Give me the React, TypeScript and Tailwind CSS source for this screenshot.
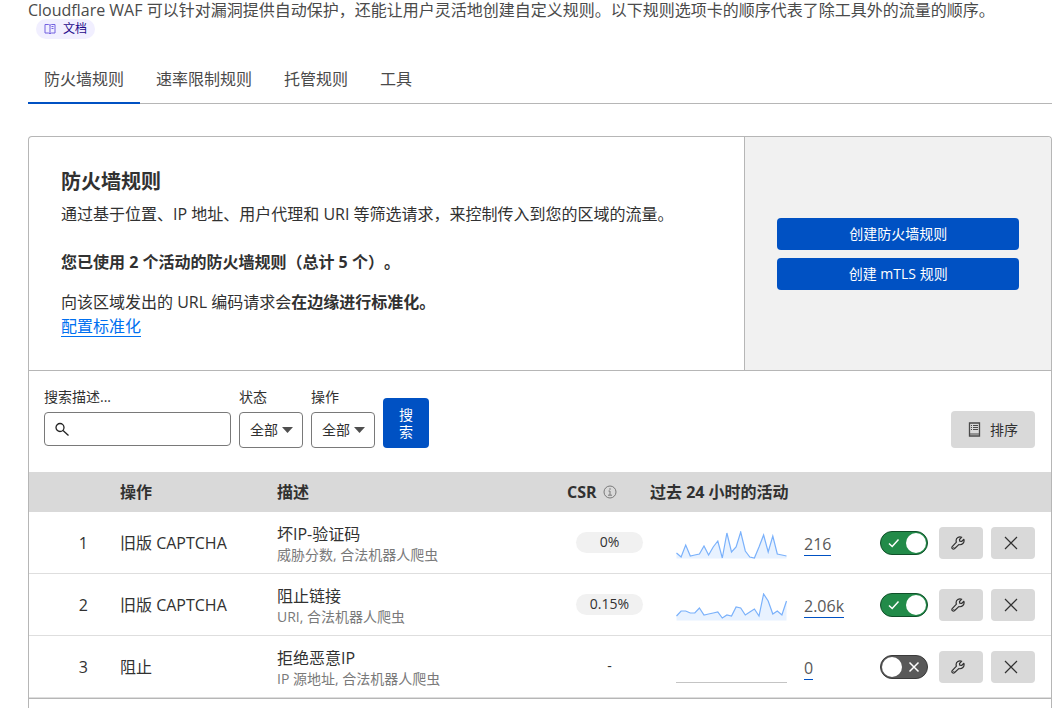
import { useState } from 'react'

type Rule = {
  id: number
  action: string
  description: string
  fields: string
  csr: string
  total: string
  activity: number[]
  enabled: boolean
}

const initialRules: Rule[] = [
  {
    id: 1,
    action: '旧版 CAPTCHA',
    description: '坏IP-验证码',
    fields: '威胁分数, 合法机器人爬虫',
    csr: '0%',
    total: '216',
    activity: [5, 1, 13, 2, 3, 4, 12, 3, 11, 17, 0, 25, 6, 11, 26, 7, 1, 0, 11, 23, 6, 22, 4, 3, 2],
    enabled: true,
  },
  {
    id: 2,
    action: '旧版 CAPTCHA',
    description: '阻止链接',
    fields: 'URI, 合法机器人爬虫',
    csr: '0.15%',
    total: '2.06k',
    activity: [4, 9, 9, 7, 7, 12, 5, 6, 7, 8, 2, 5, 4, 13, 12, 5, 8, 11, 4, 26, 19, 6, 9, 5, 19],
    enabled: true,
  },
  {
    id: 3,
    action: '阻止',
    description: '拒绝恶意IP',
    fields: 'IP 源地址, 合法机器人爬虫',
    csr: '-',
    total: '0',
    activity: [],
    enabled: false,
  },
]

const tabs = ['防火墙规则', '速率限制规则', '托管规则', '工具']

function BookIcon() {
  return (
    <svg width="12" height="12" viewBox="0 0 12 12" fill="none" stroke="currentColor" aria-hidden="true">
      <path d="M1 1.5h3.5L6 2.2l1.5-.7H11V10H7.5L6 10.7 4.5 10H1zM6 2.2v8.5" />
      <path d="M7.5 3.500h2M7.5 5.500h2" />
    </svg>
  )
}

function InfoIcon() {
  return (
    <svg width="14" height="14" viewBox="0 0 14 14" fill="none" stroke="#797979" aria-hidden="true">
      <circle cx="7" cy="7" r="6" />
      <path d="M5.5 6H7v4M5 10.200h4" />
      <circle cx="7" cy="4" r="0.8" fill="#797979" stroke="none" />
    </svg>
  )
}

function ListIcon() {
  return (
    <svg width="13" height="15" viewBox="0 0 13 15" fill="none" stroke="#4a4a4a" aria-hidden="true">
      <path d="M1.5 1h10v13h-10z" strokeWidth="1.3" />
      <path d="M3 3.5h1M5 3.5h5M3 5.5h1M5 5.5h5M3 7.5h1M5 7.5h5" />
      <path d="M1 12h11" />
    </svg>
  )
}

function SearchIcon() {
  return (
    <svg
      className="pointer-events-none absolute left-[11px] top-2.5"
      width="15"
      height="15"
      viewBox="0 0 15 15"
      fill="none"
      stroke="#222"
      strokeWidth="1.3"
      aria-hidden="true"
    >
      <circle cx="5" cy="5.5" r="4" />
      <path d="M8 8.5l5.500 5" />
    </svg>
  )
}

function WrenchIcon() {
  return (
    <svg width="14" height="14" viewBox="0 0 14 14" fill="none" stroke="#313131" strokeWidth="1.2" aria-hidden="true">
      <path
        strokeLinejoin="round"
        d="M12.9 3.300 10.600 5.500 8.700 5.200 8.500 3.500 10.700 1.200C7.900.1 5 1.900 5.100 4.700c0 .5.1 1 .3 1.400L1.200 10.700c-1 1.500.7 3.100 2.200 2.100L7.800 8.600c3.200.8 6-2 5.100-5.300z"
      />
      <path d="M2.400 11.500h.8" />
    </svg>
  )
}

function CloseIcon() {
  return (
    <svg width="14" height="14" viewBox="0 0 14 14" fill="none" stroke="#313131" strokeWidth="1.2" aria-hidden="true">
      <path d="M1 1l12 12M13 1L1 13" />
    </svg>
  )
}

function Sparkline({ values }: { values: number[] }) {
  if (values.length === 0) {
    return (
      <svg width="111" height="28" viewBox="0 0 111 28" aria-hidden="true">
        <path d="M0 27.5h111" stroke="#c4c4c4" />
      </svg>
    )
  }

  const step = 110 / (values.length - 1)
  const points = values.map((v, i) => `${(i * step + 0.5).toFixed(1)},${27 - v}`).join(' ')

  return (
    <svg width="111" height="28" viewBox="0 0 111 28" aria-hidden="true">
      <polygon points={`0.5,27.5 ${points} 110.5,27.5`} fill="#e8f2ff" />
      <polyline points={points} fill="none" stroke="#7ab1fb" strokeWidth="1.2" />
    </svg>
  )
}

function Toggle({ checked, label, onChange }: { checked: boolean; label: string; onChange: () => void }) {
  return (
    <span className="relative block h-6 w-12">
      <input
        type="checkbox"
        role="switch"
        aria-label={label}
        checked={checked}
        onChange={onChange}
        className="block h-6 w-12 cursor-pointer appearance-none rounded-full border border-[#3b3b3b] bg-[#595959] checked:border-[#11502a] checked:bg-[#228b49]"
      />
      <span
        className={`pointer-events-none absolute top-0.5 h-5 w-5 rounded-full bg-white ${checked ? 'right-0.5' : 'left-0.5'}`}
      />
      <svg
        className={`pointer-events-none absolute top-1.5 ${checked ? 'left-2' : 'right-2'}`}
        width="12"
        height="12"
        viewBox="0 0 12 12"
        fill="none"
        stroke="white"
        strokeWidth="1.5"
        aria-hidden="true"
      >
        <path d={checked ? 'M1 6.5l3.2 3L10.5 2.5' : 'M1.5 1.5l9 9M10.5 1.5l-9 9'} />
      </svg>
    </span>
  )
}

function FilterSelect({ id, label }: { id: string; label: string }) {
  return (
    <div className="flex flex-col gap-[5px]">
      <label htmlFor={id} className="text-sm leading-5">
        {label}
      </label>
      <div className="relative">
        <select
          id={id}
          className="block h-9 w-16 appearance-none rounded border border-[#797979] bg-white pl-2.5 text-sm"
        >
          <option>全部</option>
        </select>
        <svg
          className="pointer-events-none absolute right-2.5 top-[15px]"
          width="11"
          height="6"
          viewBox="0 0 11 6"
          aria-hidden="true"
        >
          <path d="M0 0h11L5.500 6z" fill="#4f4f4f" />
        </svg>
      </div>
    </div>
  )
}

export default function App() {
  const [rules, setRules] = useState(initialRules)
  const [activeTab, setActiveTab] = useState(tabs[0])

  const toggleRule = (id: number) => {
    setRules(rules.map((rule) => (rule.id === id ? { ...rule, enabled: !rule.enabled } : rule)))
  }

  return (
    <div className="flex min-h-screen flex-col bg-white pl-7 pr-[9px] font-['Open_Sans','Noto_Sans_CJK_SC',sans-serif] text-base text-[#313131] [text-spacing-trim:space-all]">
      <p className="h-[19px] whitespace-nowrap leading-5 text-[#4a4a4a]">
        Cloudflare WAF 可以针对漏洞提供自动保护，还能让用户灵活地创建自定义规则。以下规则选项卡的顺序代表了除工具外的流量的顺序。
      </p>
      <a
        href="#docs"
        className="ml-2 flex h-5 items-center gap-[7px] self-start rounded-full bg-[#f1efff] px-2 text-xs text-[#1f0a8a]"
      >
        <span className="text-[#7361e0]">
          <BookIcon />
        </span>
        文档
      </a>

      <nav className="mt-4 flex border-b border-[#b6b6b6]">
        {tabs.map((tab) => (
          <button
            key={tab}
            type="button"
            onClick={() => setActiveTab(tab)}
            className={`-mb-px h-[49px] border-b-2 px-4 leading-6 text-[#4a4a4a] ${
              tab === activeTab ? 'border-[#0051c3]' : 'border-transparent'
            }`}
          >
            {tab}
          </button>
        ))}
      </nav>

      <main className="mt-8 flex-1 rounded-t border border-b-0 border-[#b6b6b6]">
        <section className="flex border-b border-[#b6b6b6]">
          <div className="flex-1 p-8 leading-6">
            <h1 className="text-xl font-bold leading-[26px]">防火墙规则</h1>
            <p className="mt-[7px]">通过基于位置、IP 地址、用户代理和 URI 等筛选请求，来控制传入到您的区域的流量。</p>
            <p className="mt-6 font-bold">您已使用 2 个活动的防火墙规则（总计 5 个）。</p>
            <p className="mt-4">
              向该区域发出的 URL 编码请求会<strong>在边缘进行标准化。</strong>
            </p>
            <a href="#normalization" className="inline-block h-[23px] border-b border-[#0070f0] text-[#0070f0]">
              配置标准化
            </a>
          </div>
          <div className="flex w-[30%] flex-col justify-center gap-2 rounded-tr border-l border-[#b6b6b6] bg-[#f1f1f1] px-8">
            <button type="button" className="h-8 rounded bg-[#0051c3] text-sm text-white">
              创建防火墙规则
            </button>
            <button type="button" className="h-8 rounded bg-[#0051c3] text-sm text-white">
              创建 mTLS 规则
            </button>
          </div>
        </section>

        <form className="flex items-end pb-6 pl-[15px] pr-4 pt-4" onSubmit={(e) => e.preventDefault()}>
          <div className="flex gap-2">
            <div className="flex flex-col gap-[5px]">
              <label htmlFor="search" className="text-sm leading-5">
                搜索描述...
              </label>
              <div className="relative">
                <SearchIcon />
                <input
                  id="search"
                  type="text"
                  className="block h-[34px] w-[187px] rounded border border-[#797979] pl-8 text-sm"
                />
              </div>
            </div>
            <FilterSelect id="status" label="状态" />
            <FilterSelect id="action" label="操作" />
            <button
              type="submit"
              className="w-[46px] self-end rounded bg-[#0051c3] px-4 py-2 text-sm leading-[17px] text-white"
            >
              搜索
            </button>
          </div>
          <button
            type="button"
            className="ml-auto flex h-[37px] items-center gap-[9px] rounded bg-[#d9d9d9] px-[17px] text-sm"
          >
            <ListIcon />
            排序
          </button>
        </form>

        <table className="w-full table-fixed border-separate border-spacing-0 border-b border-[#b6b6b6] text-left">
          <colgroup>
            <col className="w-[75px]" />
            <col className="w-[157px]" />
            <col />
            <col className="w-[99px]" />
            <col className="w-[218px]" />
            <col className="w-[183px]" />
          </colgroup>
          <thead>
            <tr className="h-10 bg-[#d9d9d9] font-bold">
              <th />
              <th className="pl-4">操作</th>
              <th className="pl-4">描述</th>
              <th className="pl-4">
                <span className="flex items-center gap-1.5">
                  CSR <InfoIcon />
                </span>
              </th>
              <th>过去 24 小时的活动</th>
              <th />
            </tr>
          </thead>
          <tbody>
            {rules.map((rule) => (
              <tr key={rule.id} className="h-[62px] *:border-b *:border-[#dedede]">
                <td className="pr-4 text-right">{rule.id}</td>
                <td className="pl-4">{rule.action}</td>
                <td className="pl-4">
                  <div className="leading-6">{rule.description}</div>
                  <div className="text-sm leading-[18px] text-[#797979]">{rule.fields}</div>
                </td>
                <td className="pl-[25px]">
                  <span
                    className={`block h-[21px] w-[67px] rounded-full text-center text-sm leading-5 ${
                      rule.csr === '-' ? '' : 'bg-[#f1f1f1]'
                    }`}
                  >
                    {rule.csr}
                  </span>
                </td>
                <td className="pl-[26px]">
                  <div className="flex items-center gap-[17px] pt-1">
                    <Sparkline values={rule.activity} />
                    <a href="#events" className="border-b border-[#0051c3] leading-[22px] text-[#595959]">
                      {rule.total}
                    </a>
                  </div>
                </td>
                <td className="pr-4">
                  <div className="flex items-center justify-end gap-2">
                    <div className="mr-[3px]">
                      <Toggle
                        checked={rule.enabled}
                        label={rule.description}
                        onChange={() => toggleRule(rule.id)}
                      />
                    </div>
                    <button type="button" aria-label="编辑" className="h-8 w-11 rounded bg-[#d9d9d9] pl-3">
                      <WrenchIcon />
                    </button>
                    <button type="button" aria-label="删除" className="h-8 w-11 rounded bg-[#d9d9d9] pl-[13px]">
                      <CloseIcon />
                    </button>
                  </div>
                </td>
              </tr>
            ))}
          </tbody>
        </table>
      </main>
    </div>
  )
}
